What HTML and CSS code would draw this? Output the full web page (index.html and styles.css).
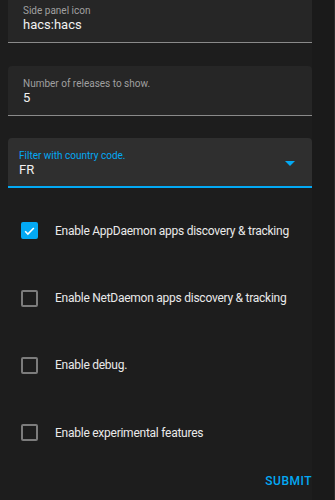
FILE: index.html
```html
<!DOCTYPE html>
<html>
<head>
<meta charset="UTF-8">
<title>HACS options</title>
<link rel="stylesheet" href="styles.css">
</head>
<body>
 <div id="wrap">
  <div id="form">
   <div class="field first">
    <label class="field_label">Side panel icon</label>
    <div class="field_value">hacs:hacs</div>
   </div>
   <div class="field">
    <label class="field_label">Number of releases to show.</label>
    <div class="field_value">5</div>
   </div>
   <div class="field select">
    <label class="field_label">Filter with country code.</label>
    <div class="field_value">FR</div>
    <span class="arrow"></span>
   </div>

   <div class="options">
    <div class="option">
     <span class="check checked">
      <svg width="14" height="14" viewBox="0 0 24 24"><path d="M4 12.5l5 5L20 6.5" fill="none" stroke="#fff" stroke-width="3"/></svg>
     </span>
     <span class="option_text">Enable AppDaemon apps discovery &amp; tracking</span>
    </div>
    <div class="option">
     <span class="check"></span>
     <span class="option_text">Enable NetDaemon apps discovery &amp; tracking</span>
    </div>
    <div class="option">
     <span class="check"></span>
     <span class="option_text">Enable debug.</span>
    </div>
    <div class="option">
     <span class="check"></span>
     <span class="option_text">Enable experimental features</span>
    </div>
   </div>

   <div class="actions">
    <span class="submit">SUBMIT</span>
   </div>
  </div>
  <div id="edge"></div>
 </div>
</body>
</html>
```

FILE: styles.css
```css
html, body {
 margin: 0;
 padding: 0;
 background-color: #1c1c1c;
 font-family: Roboto, "Liberation Sans", sans-serif;
 overflow: hidden;
}

#wrap {
 display: flex;
 width: 335px;
 height: 500px;
}

#form {
 width: 304px;
 padding-left: 8px;
 background-color: #1d1d1d;
}

#edge {
 flex: 1;
 background-color: #1a1a1a;
 border-right: 1px solid #2c2c2c;
}

.field {
 position: relative;
 height: 49px;
 padding: 0 15px;
 background-color: #262626;
 border-bottom: 1px solid #8a8a8a;
 border-radius: 4px 4px 0 0;
 margin-bottom: 22px;
}

.field.first {
 margin-top: -7px;
 margin-bottom: 23px;
}

.field_label {
 display: block;
 padding-top: 10px;
 font-size: 10px;
 line-height: 15px;
 color: #a0a0a0;
}

.field_value {
 font-size: 13px;
 line-height: 14px;
 color: #f1f1f1;
}

.select {
 height: 48px;
 padding: 0 11px;
 background-color: #2f2f2f;
 border-bottom: 2px solid #03a9f4;
 margin-bottom: 9px;
}

.select .field_label {
 color: #03a9f4;
}

.arrow {
 position: absolute;
 right: 17px;
 top: 23px;
 width: 0;
 height: 0;
 border-left: 5px solid transparent;
 border-right: 5px solid transparent;
 border-top: 5px solid #03a9f4;
}

.options {
 display: flex;
 flex-direction: column;
}

.option {
 display: flex;
 align-items: center;
 height: 67.4px;
 padding-left: 13px;
}

.check {
 box-sizing: border-box;
 display: flex;
 align-items: center;
 justify-content: center;
 flex-shrink: 0;
 width: 17px;
 height: 17px;
 border: 2px solid #7c7c7c;
 border-radius: 2px;
 margin-right: 17px;
}

.check.checked {
 background-color: #03a9f4;
 border-color: #03a9f4;
}

.option_text {
 font-size: 12px;
 letter-spacing: -0.25px;
 white-space: nowrap;
 color: #eaeaea;
}

.actions {
 display: flex;
 justify-content: flex-end;
 padding-top: 6px;
}

.submit {
 font-size: 12px;
 font-weight: 500;
 letter-spacing: 0.5px;
 line-height: 16px;
 color: #03a9f4;
}
```
